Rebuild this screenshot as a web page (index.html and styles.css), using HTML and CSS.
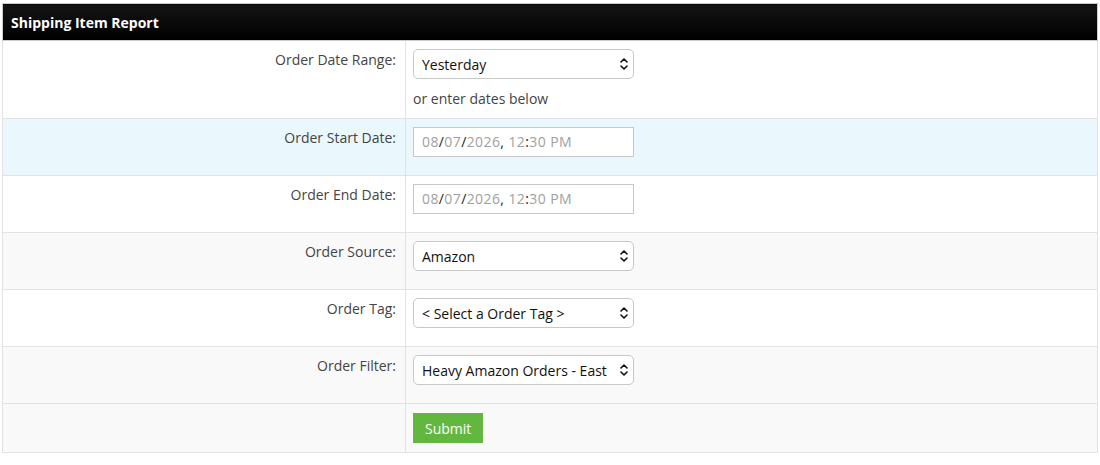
FILE: index.html
```html
<!DOCTYPE html>
<html lang="en">
<head>
    <meta charset="UTF-8">
    <meta name="viewport" content="width=device-width, initial-scale=1.0">
    <title>Shipping Item Report</title>
    <link rel="stylesheet" href="styles.css">
</head>
<body>
    <table class="report">
        <thead>
            <tr>
                <th colspan="2">Shipping Item Report</th>
            </tr>
        </thead>
        <tbody>
            <tr>
                <td class="label">Order Date Range:</td>
                <td class="field">
                    <div class="select-wrap">
                        <select>
                            <option>Yesterday</option>
                        </select>
                        <svg class="chevron" viewBox="0 0 8 14" width="8" height="14"><path d="M1 5 L4 2 L7 5 M1 9 L4 12 L7 9" fill="none" stroke="#111" stroke-width="1.6" stroke-linecap="round" stroke-linejoin="round"/></svg>
                    </div>
                    <div class="hint">or enter dates below</div>
                </td>
            </tr>
            <tr class="highlight">
                <td class="label">Order Start Date:</td>
                <td class="field">
                    <div class="date-input"><span class="seg">08</span>/<span class="seg">07</span>/<span class="seg">2026</span>, <span class="seg">12</span>:<span class="seg">30 PM</span></div>
                </td>
            </tr>
            <tr>
                <td class="label">Order End Date:</td>
                <td class="field">
                    <div class="date-input"><span class="seg">08</span>/<span class="seg">07</span>/<span class="seg">2026</span>, <span class="seg">12</span>:<span class="seg">30 PM</span></div>
                </td>
            </tr>
            <tr class="alt">
                <td class="label">Order Source:</td>
                <td class="field">
                    <div class="select-wrap">
                        <select>
                            <option>Amazon</option>
                        </select>
                        <svg class="chevron" viewBox="0 0 8 14" width="8" height="14"><path d="M1 5 L4 2 L7 5 M1 9 L4 12 L7 9" fill="none" stroke="#111" stroke-width="1.6" stroke-linecap="round" stroke-linejoin="round"/></svg>
                    </div>
                </td>
            </tr>
            <tr>
                <td class="label">Order Tag:</td>
                <td class="field">
                    <div class="select-wrap">
                        <select>
                            <option>&lt; Select a Order Tag &gt;</option>
                        </select>
                        <svg class="chevron" viewBox="0 0 8 14" width="8" height="14"><path d="M1 5 L4 2 L7 5 M1 9 L4 12 L7 9" fill="none" stroke="#111" stroke-width="1.6" stroke-linecap="round" stroke-linejoin="round"/></svg>
                    </div>
                </td>
            </tr>
            <tr class="alt">
                <td class="label">Order Filter:</td>
                <td class="field">
                    <div class="select-wrap">
                        <select>
                            <option>Heavy Amazon Orders - East</option>
                        </select>
                        <svg class="chevron" viewBox="0 0 8 14" width="8" height="14"><path d="M1 5 L4 2 L7 5 M1 9 L4 12 L7 9" fill="none" stroke="#111" stroke-width="1.6" stroke-linecap="round" stroke-linejoin="round"/></svg>
                    </div>
                </td>
            </tr>
            <tr class="alt">
                <td class="label"></td>
                <td class="field submit-cell">
                    <button class="submit-btn">Submit</button>
                </td>
            </tr>
        </tbody>
    </table>
</body>
</html>
```

FILE: styles.css
```css
* {
    box-sizing: border-box;
}

body {
    margin: 0;
    padding: 3px 2px;
    background-color: #ffffff;
    font-family: 'Open Sans', 'Noto Sans', sans-serif;
    font-size: 14px;
    color: #444;
}

.report {
    width: 1096px;
    border-collapse: collapse;
    border: 1px solid #dddddd;
}

.report th {
    background: linear-gradient(to bottom, #141414, #000000);
    color: #ffffff;
    font-weight: bold;
    font-size: 14px;
    text-align: left;
    height: 37px;
    padding: 0 8px;
    border: 1px solid #cccccc;
}

.report td {
    border: 1px solid #e2e2e2;
    vertical-align: top;
    padding: 8px;
}

.report tr.highlight td {
    background-color: #eaf7fc;
}

.report tr.alt td {
    background-color: #f9f9f9;
}

.report td.label {
    width: 403px;
    text-align: right;
    line-height: 20px;
    padding: 9px 9px 8px 8px;
    color: #444;
}

.report td.field {
    padding-left: 7px;
}

.select-wrap {
    position: relative;
    width: 221px;
    margin-bottom: 10px;
}

.select-wrap select {
    appearance: none;
    -webkit-appearance: none;
    width: 221px;
    height: 30px;
    padding: 0 24px 0 8px;
    border: 1px solid #c8c8c8;
    border-radius: 5px;
    background-color: #ffffff;
    font-family: 'Open Sans', 'Noto Sans', sans-serif;
    font-size: 14px;
    color: #111;
}

.chevron {
    position: absolute;
    right: 6px;
    top: 8px;
    pointer-events: none;
}

.hint {
    line-height: 20px;
    color: #444;
    margin-bottom: 1px;
}

.date-input {
    width: 221px;
    height: 30px;
    line-height: 28px;
    padding: 0 8px;
    margin-bottom: 10px;
    border: 1px solid #c8c8c8;
    background-color: #ffffff;
    color: #222;
    font-size: 14px;
    letter-spacing: 0.4px;
}

.date-input .seg {
    color: #a0a0a0;
}

.report td.submit-cell {
    padding-top: 9px;
    padding-bottom: 9px;
}

.submit-btn {
    height: 30px;
    padding: 0 12px;
    border: none;
    background-color: #62b83f;
    color: #ffffff;
    font-family: 'Open Sans', 'Noto Sans', sans-serif;
    font-size: 14px;
    cursor: pointer;
    display: block;
}
```
